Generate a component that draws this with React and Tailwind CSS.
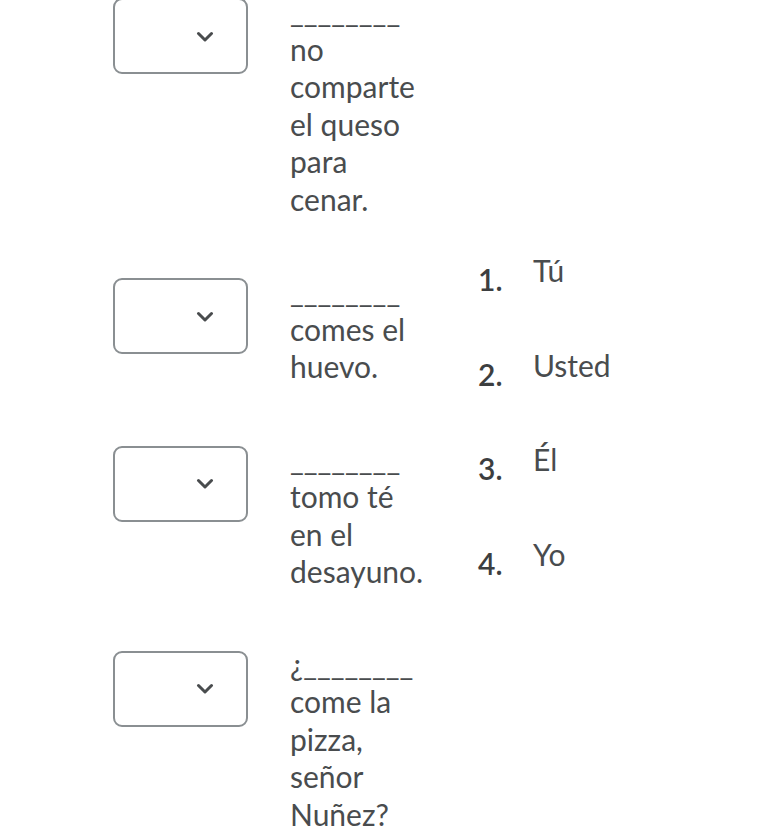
const rows = [
  "________ no comparte el queso para cenar.",
  "________ comes el huevo.",
  "________ tomo té en el desayuno.",
  "¿________ come la pizza, señor Nuñez?",
];

const choices = ["Tú", "Usted", "Él", "Yo"];

function Chevron() {
  return (
    <svg width="18" height="11" viewBox="0 0 18 11" fill="none">
      <path
        d="M2.5 2.5l6.5 6.5 6.5-6.5"
        stroke="#494c4e"
        strokeWidth="3"
        strokeLinecap="round"
        strokeLinejoin="round"
      />
    </svg>
  );
}

function SelectBox() {
  return (
    <div className="w-[135px] h-[76px] shrink-0 rounded-[9px] border-2 border-[#8a8f92] bg-white flex items-center justify-end pr-[32px] mt-[5px]">
      <Chevron />
    </div>
  );
}

export default function App() {
  return (
    <div className="w-[772px] h-[828px] overflow-hidden bg-white text-[#494c4e] font-['Lato',sans-serif]">
      <div className="flex -mt-[7px] pl-[113px]">
        <div className="flex flex-col gap-[55px]">
          {rows.map((text, i) => (
            <div key={i} className="flex">
              <SelectBox />
              <p className="ml-[42px] w-[140px] text-[30px] leading-[37.5px]">
                {text}
              </p>
            </div>
          ))}
        </div>
        <ol className="ml-[48px] mt-[259px] flex flex-col gap-[48px]">
          {choices.map((c, i) => (
            <li key={c} className="flex items-start">
              <span className="w-[55px] text-[30px] font-semibold text-[#3c3e40] leading-[37.5px] mt-[9px]">
                {i + 1}.
              </span>
              <span className="text-[30px] leading-[37.5px]">{c}</span>
            </li>
          ))}
        </ol>
      </div>
    </div>
  );
}
